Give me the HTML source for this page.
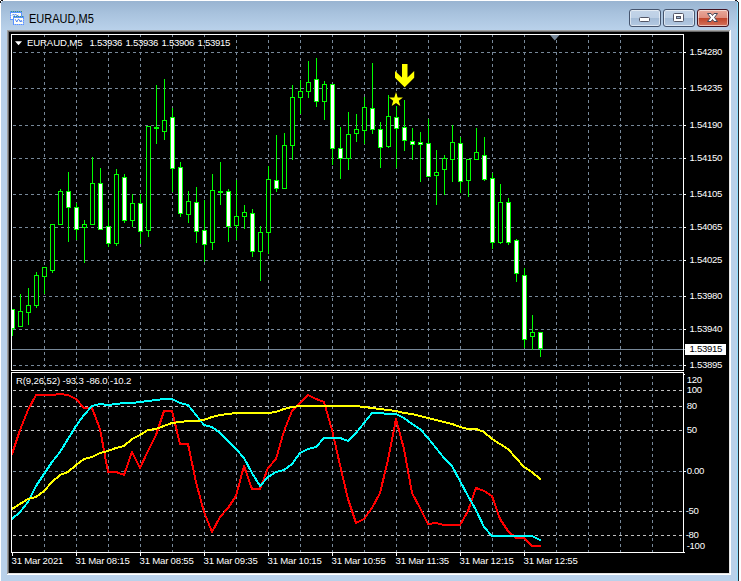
<!DOCTYPE html>
<html><head><meta charset="utf-8"><title>EURAUD,M5</title>
<style>
html,body{margin:0;padding:0;background:#fff;}
body{width:741px;height:581px;position:relative;overflow:hidden;font-family:"Liberation Sans",sans-serif;}
.win{position:absolute;left:1px;top:1px;width:736px;height:600px;background:#b9d1ea;}
.title{position:absolute;left:0;top:0;width:736px;height:29px;background:linear-gradient(#99b4d1,#a9c3de 45%,#b9d1ea);}
.edge-r1{position:absolute;left:737px;top:1px;width:1px;height:600px;background:#8fe0ff;}
.edge-r2{position:absolute;left:738px;top:0;width:1px;height:600px;background:#2a2a30;}
.cap{position:absolute;left:29.3px;top:11px;transform:scaleX(0.917);font-size:12px;line-height:16px;color:#000;white-space:nowrap;transform-origin:0 0;}
.sunk{position:absolute;left:7px;top:30px;width:724px;height:545px;background:#fff;}
.sunk .a{position:absolute;left:0;top:0;width:723px;height:544px;background:#a0a0a0;}
.sunk .b{position:absolute;left:1px;top:1px;width:722px;height:543px;background:#696969;}
.sunk .c{position:absolute;left:722px;top:1px;width:1px;height:543px;background:#e3e3e3;}
.sunk .d{position:absolute;left:1px;top:543px;width:722px;height:1px;background:#e3e3e3;}
.client{position:absolute;left:9px;top:32px;width:720px;height:541px;background:#000;overflow:hidden;}
.chart{position:absolute;left:0;top:0;}
.t{position:absolute;font-size:9.6px;line-height:11px;letter-spacing:-0.3px;color:#fff;white-space:nowrap;margin-left:-9px;margin-top:-32px;}
.t.blk{color:#000;}
.t.l{letter-spacing:-0.13px;}
.t.d{letter-spacing:-0.2px;}
.btn{position:absolute;top:9px;height:16px;border:1px solid #46556e;border-radius:3px;box-shadow:inset 0 0 0 1px rgba(255,255,255,.55);background:linear-gradient(#c3d4e8 0,#bccfe5 48%,#a4bcd7 52%,#b4c9e2 100%);}
.btn.x{border-color:#431422;background:linear-gradient(#e9a99b 0,#df8d7d 48%,#c1452b 52%,#d4735c 100%);}
.px{position:absolute;background:#15151a;}
.btn svg{position:absolute;left:0;top:0;}
</style></head><body>
<div class="win"><div class="title"></div></div>
<div class="edge-r1"></div><div class="edge-r2"></div>
<svg style="position:absolute;left:10px;top:11px" width="15" height="15" viewBox="0 0 15 15" shape-rendering="crispEdges">
<rect x="0" y="0" width="12" height="9" fill="#5a93ff"/>
<rect x="1" y="2" width="10" height="6" fill="#fffef6"/>
<path d="M1 0h1M3 0h1M5 0h1M7 0h1M9 0h1M11 0h1" stroke="#3f9a6a" stroke-width="1" transform="translate(0,0.5)"/>
<path d="M0 3h1M0 5h1M0 7h1" stroke="#8fb5ff" stroke-width="1" transform="translate(0,0.5)"/>
<polyline shape-rendering="auto" points="2,4.5 3.3,3.2 4.3,4.5 5.5,3 7,4.8 8.5,4" fill="none" stroke="#3c78f0" stroke-width="0.9"/>
<rect x="3" y="5" width="11" height="9" fill="#5a93ff"/>
<rect x="4" y="7" width="9" height="6" fill="#fffef6"/>
<path d="M4 5h1M6 5h1M8 5h1M10 5h1M12 5h1" stroke="#3f9a6a" stroke-width="1" transform="translate(0,0.5)"/>
<path d="M13 8h1M13 10h1M13 12h1M4 13h1M6 13h1M8 13h1M10 13h1M12 13h1" stroke="#8fb5ff" stroke-width="1" transform="translate(0,0.5)"/>
<polyline shape-rendering="auto" points="5.2,8.2 6.8,11 8.2,8.4 9,8.4 10.4,11 11.2,9.3 12,11" fill="none" stroke="#3c78f0" stroke-width="0.9"/>
</svg>
<div class="cap" id="cap">EURAUD,M5</div>
<div class="btn" style="left:629px;width:30px;"><svg width="29" height="16" viewBox="0 0 29 16"><rect x="9.5" y="7.5" width="10" height="4" rx="1" fill="#fff" stroke="#535666"/></svg></div>
<div class="btn" style="left:663px;width:30px;"><svg width="29" height="16" viewBox="0 0 29 16"><rect x="9.5" y="3.5" width="10" height="8" rx="1" fill="#fff" stroke="#535666"/><rect x="12.5" y="6.5" width="4" height="2" fill="#9ab3d0" stroke="#535666"/></svg></div>
<div class="btn x" style="left:697px;width:30px;"><svg width="30" height="16" viewBox="0 0 30 16"><path d="M9.5 3.5 L13 3.5 L14.5 5.5 L16 3.5 L19.5 3.5 L16.5 7.5 L19.5 11.5 L16 11.5 L14.5 9.5 L13 11.5 L9.5 11.5 L12.5 7.5 Z" fill="#fff" stroke="#47495a" stroke-width="1" stroke-linejoin="round"/></svg></div>
<div class="px" style="left:1px;top:0;width:2px;height:1px"></div><div class="px" style="left:0;top:1px;width:1px;height:2px"></div><div class="px" style="left:1px;top:1px;width:1px;height:1px;background:#fff"></div>
<div class="px" style="left:735px;top:0;width:2px;height:1px"></div><div class="px" style="left:737px;top:1px;width:1px;height:1px"></div><div class="px" style="left:738px;top:0;width:1px;height:2px;background:#fff"></div>
<div class="sunk"><div class="a"></div><div class="b"></div><div class="c"></div><div class="d"></div></div>
<div class="client">
<svg class="chart" width="720" height="541" viewBox="9 32 720 541" shape-rendering="crispEdges">
<line x1="44.5" y1="34" x2="44.5" y2="552" stroke="#778899" stroke-dasharray="3 3"/>
<line x1="76.5" y1="34" x2="76.5" y2="552" stroke="#778899" stroke-dasharray="3 3"/>
<line x1="108.5" y1="34" x2="108.5" y2="552" stroke="#778899" stroke-dasharray="3 3"/>
<line x1="140.5" y1="34" x2="140.5" y2="552" stroke="#778899" stroke-dasharray="3 3"/>
<line x1="172.5" y1="34" x2="172.5" y2="552" stroke="#778899" stroke-dasharray="3 3"/>
<line x1="204.5" y1="34" x2="204.5" y2="552" stroke="#778899" stroke-dasharray="3 3"/>
<line x1="236.5" y1="34" x2="236.5" y2="552" stroke="#778899" stroke-dasharray="3 3"/>
<line x1="268.5" y1="34" x2="268.5" y2="552" stroke="#778899" stroke-dasharray="3 3"/>
<line x1="300.5" y1="34" x2="300.5" y2="552" stroke="#778899" stroke-dasharray="3 3"/>
<line x1="332.5" y1="34" x2="332.5" y2="552" stroke="#778899" stroke-dasharray="3 3"/>
<line x1="364.5" y1="34" x2="364.5" y2="552" stroke="#778899" stroke-dasharray="3 3"/>
<line x1="396.5" y1="34" x2="396.5" y2="552" stroke="#778899" stroke-dasharray="3 3"/>
<line x1="428.5" y1="34" x2="428.5" y2="552" stroke="#778899" stroke-dasharray="3 3"/>
<line x1="460.5" y1="34" x2="460.5" y2="552" stroke="#778899" stroke-dasharray="3 3"/>
<line x1="492.5" y1="34" x2="492.5" y2="552" stroke="#778899" stroke-dasharray="3 3"/>
<line x1="524.5" y1="34" x2="524.5" y2="552" stroke="#778899" stroke-dasharray="3 3"/>
<line x1="556.5" y1="34" x2="556.5" y2="552" stroke="#778899" stroke-dasharray="3 3"/>
<line x1="588.5" y1="34" x2="588.5" y2="552" stroke="#778899" stroke-dasharray="3 3"/>
<line x1="620.5" y1="34" x2="620.5" y2="552" stroke="#778899" stroke-dasharray="3 3"/>
<line x1="652.5" y1="34" x2="652.5" y2="552" stroke="#778899" stroke-dasharray="3 3"/>
<line x1="13" y1="52.5" x2="683" y2="52.5" stroke="#778899" stroke-dasharray="3 3"/>
<line x1="13" y1="88.5" x2="683" y2="88.5" stroke="#778899" stroke-dasharray="3 3"/>
<line x1="13" y1="125.5" x2="683" y2="125.5" stroke="#778899" stroke-dasharray="3 3"/>
<line x1="13" y1="158.5" x2="683" y2="158.5" stroke="#778899" stroke-dasharray="3 3"/>
<line x1="13" y1="194.5" x2="683" y2="194.5" stroke="#778899" stroke-dasharray="3 3"/>
<line x1="13" y1="227.5" x2="683" y2="227.5" stroke="#778899" stroke-dasharray="3 3"/>
<line x1="13" y1="260.5" x2="683" y2="260.5" stroke="#778899" stroke-dasharray="3 3"/>
<line x1="13" y1="296.5" x2="683" y2="296.5" stroke="#778899" stroke-dasharray="3 3"/>
<line x1="13" y1="329.5" x2="683" y2="329.5" stroke="#778899" stroke-dasharray="3 3"/>
<line x1="13" y1="365.5" x2="683" y2="365.5" stroke="#778899" stroke-dasharray="3 3"/>
<line x1="13" y1="471.5" x2="683" y2="471.5" stroke="#778899" stroke-dasharray="3 3"/>
<line x1="13" y1="390.5" x2="683" y2="390.5" stroke="#c0c0c0" stroke-dasharray="3 3"/>
<line x1="13" y1="406.5" x2="683" y2="406.5" stroke="#c0c0c0" stroke-dasharray="3 3"/>
<line x1="13" y1="430.5" x2="683" y2="430.5" stroke="#c0c0c0" stroke-dasharray="3 3"/>
<line x1="13" y1="511.5" x2="683" y2="511.5" stroke="#c0c0c0" stroke-dasharray="3 3"/>
<line x1="13" y1="535.5" x2="683" y2="535.5" stroke="#c0c0c0" stroke-dasharray="3 3"/>
<rect x="9" y="371" width="720" height="1" fill="#000"/>
<line x1="12" y1="349.5" x2="685" y2="349.5" stroke="#778899"/>
<rect x="12" y="309" width="1" height="27" fill="#00ff00"/>
<rect x="10" y="309" width="5" height="20" fill="#00ff00"/>
<rect x="11" y="310" width="3" height="18" fill="#fff"/>
<rect x="20" y="294" width="1" height="33" fill="#00ff00"/>
<rect x="18" y="311" width="5" height="16" fill="#00ff00"/>
<rect x="19" y="312" width="3" height="14" fill="#000"/>
<rect x="28" y="288" width="1" height="37" fill="#00ff00"/>
<rect x="26" y="305" width="5" height="8" fill="#00ff00"/>
<rect x="27" y="306" width="3" height="6" fill="#000"/>
<rect x="36" y="272" width="1" height="36" fill="#00ff00"/>
<rect x="34" y="275" width="5" height="31" fill="#00ff00"/>
<rect x="35" y="276" width="3" height="29" fill="#000"/>
<rect x="44" y="267" width="1" height="27" fill="#00ff00"/>
<rect x="42" y="267" width="5" height="10" fill="#00ff00"/>
<rect x="43" y="268" width="3" height="8" fill="#000"/>
<rect x="52" y="224" width="1" height="49" fill="#00ff00"/>
<rect x="50" y="224" width="5" height="47" fill="#00ff00"/>
<rect x="51" y="225" width="3" height="45" fill="#000"/>
<rect x="60" y="189" width="1" height="36" fill="#00ff00"/>
<rect x="58" y="191" width="5" height="34" fill="#00ff00"/>
<rect x="59" y="192" width="3" height="32" fill="#000"/>
<rect x="68" y="172" width="1" height="70" fill="#00ff00"/>
<rect x="66" y="191" width="5" height="17" fill="#00ff00"/>
<rect x="67" y="192" width="3" height="15" fill="#fff"/>
<rect x="76" y="203" width="1" height="37" fill="#00ff00"/>
<rect x="74" y="207" width="5" height="23" fill="#00ff00"/>
<rect x="75" y="208" width="3" height="21" fill="#fff"/>
<rect x="84" y="220" width="1" height="43" fill="#00ff00"/>
<rect x="82" y="224" width="5" height="4" fill="#00ff00"/>
<rect x="83" y="225" width="3" height="2" fill="#000"/>
<rect x="92" y="157" width="1" height="68" fill="#00ff00"/>
<rect x="90" y="183" width="5" height="42" fill="#00ff00"/>
<rect x="91" y="184" width="3" height="40" fill="#000"/>
<rect x="100" y="168" width="1" height="62" fill="#00ff00"/>
<rect x="98" y="183" width="5" height="47" fill="#00ff00"/>
<rect x="99" y="184" width="3" height="45" fill="#fff"/>
<rect x="108" y="210" width="1" height="37" fill="#00ff00"/>
<rect x="106" y="226" width="5" height="18" fill="#00ff00"/>
<rect x="107" y="227" width="3" height="16" fill="#fff"/>
<rect x="116" y="169" width="1" height="77" fill="#00ff00"/>
<rect x="114" y="174" width="5" height="70" fill="#00ff00"/>
<rect x="115" y="175" width="3" height="68" fill="#000"/>
<rect x="124" y="174" width="1" height="49" fill="#00ff00"/>
<rect x="122" y="177" width="5" height="44" fill="#00ff00"/>
<rect x="123" y="178" width="3" height="42" fill="#fff"/>
<rect x="132" y="194" width="1" height="33" fill="#00ff00"/>
<rect x="130" y="203" width="5" height="18" fill="#00ff00"/>
<rect x="131" y="204" width="3" height="16" fill="#000"/>
<rect x="140" y="194" width="1" height="50" fill="#00ff00"/>
<rect x="138" y="203" width="5" height="29" fill="#00ff00"/>
<rect x="139" y="204" width="3" height="27" fill="#fff"/>
<rect x="148" y="126" width="1" height="111" fill="#00ff00"/>
<rect x="146" y="126" width="5" height="105" fill="#00ff00"/>
<rect x="147" y="127" width="3" height="103" fill="#000"/>
<rect x="156" y="85" width="1" height="59" fill="#00ff00"/>
<rect x="154" y="127" width="5" height="2" fill="#00ff00"/>
<rect x="164" y="79" width="1" height="61" fill="#00ff00"/>
<rect x="162" y="120" width="5" height="12" fill="#00ff00"/>
<rect x="163" y="121" width="3" height="10" fill="#000"/>
<rect x="172" y="108" width="1" height="84" fill="#00ff00"/>
<rect x="170" y="117" width="5" height="52" fill="#00ff00"/>
<rect x="171" y="118" width="3" height="50" fill="#fff"/>
<rect x="180" y="162" width="1" height="55" fill="#00ff00"/>
<rect x="178" y="167" width="5" height="47" fill="#00ff00"/>
<rect x="179" y="168" width="3" height="45" fill="#fff"/>
<rect x="188" y="191" width="1" height="32" fill="#00ff00"/>
<rect x="186" y="201" width="5" height="14" fill="#00ff00"/>
<rect x="187" y="202" width="3" height="12" fill="#000"/>
<rect x="196" y="187" width="1" height="56" fill="#00ff00"/>
<rect x="194" y="202" width="5" height="30" fill="#00ff00"/>
<rect x="195" y="203" width="3" height="28" fill="#fff"/>
<rect x="204" y="200" width="1" height="62" fill="#00ff00"/>
<rect x="202" y="230" width="5" height="15" fill="#00ff00"/>
<rect x="203" y="231" width="3" height="13" fill="#fff"/>
<rect x="212" y="174" width="1" height="76" fill="#00ff00"/>
<rect x="210" y="190" width="5" height="53" fill="#00ff00"/>
<rect x="211" y="191" width="3" height="51" fill="#000"/>
<rect x="220" y="162" width="1" height="43" fill="#00ff00"/>
<rect x="218" y="191" width="5" height="2" fill="#00ff00"/>
<rect x="228" y="189" width="1" height="53" fill="#00ff00"/>
<rect x="226" y="191" width="5" height="36" fill="#00ff00"/>
<rect x="227" y="192" width="3" height="34" fill="#fff"/>
<rect x="236" y="180" width="1" height="60" fill="#00ff00"/>
<rect x="234" y="216" width="5" height="10" fill="#00ff00"/>
<rect x="235" y="217" width="3" height="8" fill="#000"/>
<rect x="244" y="205" width="1" height="24" fill="#00ff00"/>
<rect x="242" y="212" width="5" height="5" fill="#00ff00"/>
<rect x="243" y="213" width="3" height="3" fill="#000"/>
<rect x="252" y="209" width="1" height="48" fill="#00ff00"/>
<rect x="250" y="213" width="5" height="39" fill="#00ff00"/>
<rect x="251" y="214" width="3" height="37" fill="#fff"/>
<rect x="260" y="226" width="1" height="55" fill="#00ff00"/>
<rect x="258" y="232" width="5" height="20" fill="#00ff00"/>
<rect x="259" y="233" width="3" height="18" fill="#000"/>
<rect x="268" y="166" width="1" height="88" fill="#00ff00"/>
<rect x="266" y="179" width="5" height="54" fill="#00ff00"/>
<rect x="267" y="180" width="3" height="52" fill="#000"/>
<rect x="276" y="135" width="1" height="57" fill="#00ff00"/>
<rect x="274" y="180" width="5" height="9" fill="#00ff00"/>
<rect x="275" y="181" width="3" height="7" fill="#fff"/>
<rect x="284" y="133" width="1" height="56" fill="#00ff00"/>
<rect x="282" y="145" width="5" height="44" fill="#00ff00"/>
<rect x="283" y="146" width="3" height="42" fill="#000"/>
<rect x="292" y="85" width="1" height="75" fill="#00ff00"/>
<rect x="290" y="97" width="5" height="49" fill="#00ff00"/>
<rect x="291" y="98" width="3" height="47" fill="#000"/>
<rect x="300" y="80" width="1" height="34" fill="#00ff00"/>
<rect x="298" y="91" width="5" height="7" fill="#00ff00"/>
<rect x="299" y="92" width="3" height="5" fill="#000"/>
<rect x="308" y="61" width="1" height="37" fill="#00ff00"/>
<rect x="306" y="82" width="5" height="10" fill="#00ff00"/>
<rect x="307" y="83" width="3" height="8" fill="#000"/>
<rect x="316" y="58" width="1" height="49" fill="#00ff00"/>
<rect x="314" y="79" width="5" height="23" fill="#00ff00"/>
<rect x="315" y="80" width="3" height="21" fill="#fff"/>
<rect x="324" y="81" width="1" height="39" fill="#00ff00"/>
<rect x="322" y="84" width="5" height="18" fill="#00ff00"/>
<rect x="323" y="85" width="3" height="16" fill="#000"/>
<rect x="332" y="84" width="1" height="81" fill="#00ff00"/>
<rect x="330" y="84" width="5" height="65" fill="#00ff00"/>
<rect x="331" y="85" width="3" height="63" fill="#fff"/>
<rect x="340" y="127" width="1" height="52" fill="#00ff00"/>
<rect x="338" y="148" width="5" height="11" fill="#00ff00"/>
<rect x="339" y="149" width="3" height="9" fill="#fff"/>
<rect x="348" y="112" width="1" height="58" fill="#00ff00"/>
<rect x="346" y="134" width="5" height="25" fill="#00ff00"/>
<rect x="347" y="135" width="3" height="23" fill="#000"/>
<rect x="356" y="114" width="1" height="28" fill="#00ff00"/>
<rect x="354" y="129" width="5" height="5" fill="#00ff00"/>
<rect x="355" y="130" width="3" height="3" fill="#000"/>
<rect x="364" y="97" width="1" height="47" fill="#00ff00"/>
<rect x="362" y="107" width="5" height="24" fill="#00ff00"/>
<rect x="363" y="108" width="3" height="22" fill="#000"/>
<rect x="372" y="63" width="1" height="71" fill="#00ff00"/>
<rect x="370" y="108" width="5" height="22" fill="#00ff00"/>
<rect x="371" y="109" width="3" height="20" fill="#fff"/>
<rect x="380" y="122" width="1" height="46" fill="#00ff00"/>
<rect x="378" y="129" width="5" height="19" fill="#00ff00"/>
<rect x="379" y="130" width="3" height="17" fill="#fff"/>
<rect x="388" y="95" width="1" height="53" fill="#00ff00"/>
<rect x="386" y="116" width="5" height="31" fill="#00ff00"/>
<rect x="387" y="117" width="3" height="29" fill="#000"/>
<rect x="396" y="106" width="1" height="62" fill="#00ff00"/>
<rect x="394" y="117" width="5" height="12" fill="#00ff00"/>
<rect x="395" y="118" width="3" height="10" fill="#fff"/>
<rect x="404" y="100" width="1" height="51" fill="#00ff00"/>
<rect x="402" y="127" width="5" height="14" fill="#00ff00"/>
<rect x="403" y="128" width="3" height="12" fill="#fff"/>
<rect x="412" y="128" width="1" height="32" fill="#00ff00"/>
<rect x="410" y="141" width="5" height="4" fill="#00ff00"/>
<rect x="411" y="142" width="3" height="2" fill="#fff"/>
<rect x="420" y="132" width="1" height="50" fill="#00ff00"/>
<rect x="418" y="142" width="5" height="3" fill="#00ff00"/>
<rect x="419" y="143" width="3" height="1" fill="#fff"/>
<rect x="428" y="119" width="1" height="58" fill="#00ff00"/>
<rect x="426" y="143" width="5" height="34" fill="#00ff00"/>
<rect x="427" y="144" width="3" height="32" fill="#fff"/>
<rect x="436" y="150" width="1" height="55" fill="#00ff00"/>
<rect x="434" y="172" width="5" height="4" fill="#00ff00"/>
<rect x="435" y="173" width="3" height="2" fill="#000"/>
<rect x="444" y="155" width="1" height="40" fill="#00ff00"/>
<rect x="442" y="158" width="5" height="12" fill="#00ff00"/>
<rect x="443" y="159" width="3" height="10" fill="#000"/>
<rect x="452" y="125" width="1" height="57" fill="#00ff00"/>
<rect x="450" y="142" width="5" height="18" fill="#00ff00"/>
<rect x="451" y="143" width="3" height="16" fill="#000"/>
<rect x="460" y="137" width="1" height="56" fill="#00ff00"/>
<rect x="458" y="143" width="5" height="39" fill="#00ff00"/>
<rect x="459" y="144" width="3" height="37" fill="#fff"/>
<rect x="468" y="159" width="1" height="38" fill="#00ff00"/>
<rect x="466" y="159" width="5" height="22" fill="#00ff00"/>
<rect x="467" y="160" width="3" height="20" fill="#000"/>
<rect x="476" y="128" width="1" height="32" fill="#00ff00"/>
<rect x="474" y="152" width="5" height="8" fill="#00ff00"/>
<rect x="475" y="153" width="3" height="6" fill="#000"/>
<rect x="484" y="137" width="1" height="44" fill="#00ff00"/>
<rect x="482" y="155" width="5" height="25" fill="#00ff00"/>
<rect x="483" y="156" width="3" height="23" fill="#fff"/>
<rect x="492" y="173" width="1" height="76" fill="#00ff00"/>
<rect x="490" y="178" width="5" height="65" fill="#00ff00"/>
<rect x="491" y="179" width="3" height="63" fill="#fff"/>
<rect x="500" y="184" width="1" height="60" fill="#00ff00"/>
<rect x="498" y="202" width="5" height="41" fill="#00ff00"/>
<rect x="499" y="203" width="3" height="39" fill="#000"/>
<rect x="508" y="198" width="1" height="47" fill="#00ff00"/>
<rect x="506" y="202" width="5" height="41" fill="#00ff00"/>
<rect x="507" y="203" width="3" height="39" fill="#fff"/>
<rect x="516" y="239" width="1" height="43" fill="#00ff00"/>
<rect x="514" y="240" width="5" height="34" fill="#00ff00"/>
<rect x="515" y="241" width="3" height="32" fill="#fff"/>
<rect x="524" y="268" width="1" height="80" fill="#00ff00"/>
<rect x="522" y="275" width="5" height="65" fill="#00ff00"/>
<rect x="523" y="276" width="3" height="63" fill="#fff"/>
<rect x="532" y="315" width="1" height="35" fill="#00ff00"/>
<rect x="530" y="332" width="5" height="5" fill="#00ff00"/>
<rect x="531" y="333" width="3" height="3" fill="#000"/>
<rect x="540" y="332" width="1" height="25" fill="#00ff00"/>
<rect x="538" y="332" width="5" height="17" fill="#00ff00"/>
<rect x="539" y="333" width="3" height="15" fill="#fff"/>
<rect x="9" y="34" width="2" height="520" fill="#000"/>
<polygon shape-rendering="auto" points="402,64 407.5,64 407.5,77.5 414.2,71 414.2,77.7 404.7,87.3 395,77.7 395,71 402,77.5" fill="#ffff00"/>
<polygon shape-rendering="auto" points="396.0,92.1 397.7,97.4 402.9,97.4 398.8,100.8 400.3,106.1 396.0,102.9 391.7,106.1 393.2,100.8 389.1,97.4 394.3,97.4" fill="#ffff00"/>
<polyline shape-rendering="crispEdges" points="12,454 20,430 28,410 36,395 44,395 52,395 60,394 68,395 76,399 84,408 92,408 100,429 108,472 116,472 124,475 132,452 140,468 148,451 156,435 164,411 172,411 180,444 188,444 196,482 204,512 212,532 220,517 228,508 236,496 244,466 252,489 260,489 268,468 276,459 284,431 292,411 300,403 308,395 316,399 324,402 332,430 340,465 348,499 356,523 364,519 372,508 380,493 388,460 396,419 404,449 412,493 420,508 428,524 436,523 444,525 452,525 460,525 468,511 476,488 484,491 492,496 500,519 508,531 516,538 524,538 532,546 540,546" fill="none" stroke="#ff0000" stroke-width="2" stroke-linejoin="round" stroke-linecap="square"/>
<polyline shape-rendering="crispEdges" points="12,519 20,512 28,502 36,486 44,474 52,462 60,452 68,439 76,426 84,415 92,406 100,404 108,405 116,404 124,403 132,403 140,402 148,401 156,400 164,399 172,399 180,403 188,405 196,415 204,425 212,427 220,433 228,441 236,449 244,458 252,473 260,486 268,477 276,472 284,470 292,464 300,453 308,449 316,447 324,438 332,438 340,438 348,441 356,433 364,423 372,413 380,413 388,414 396,414 404,418 412,424 420,429 428,438 436,448 444,458 452,466 460,481 468,496 476,510 484,527 492,536 500,536 508,536 516,536 524,536 532,536 540,540" fill="none" stroke="#00ffff" stroke-width="2" stroke-linejoin="round" stroke-linecap="square"/>
<polyline shape-rendering="crispEdges" points="12,509 20,504 28,499 36,497 44,491 52,482 60,475 68,472 76,465 84,459 92,457 100,453 108,451 116,448 124,446 132,439 140,435 148,430 156,429 164,426 172,423 180,422 188,421 196,421 204,420 212,417 220,415 228,414 236,413 244,413 252,413 260,413 268,413 276,412 284,409 292,407 300,406 308,406 316,406 324,406 332,406 340,406 348,406 356,406 364,407 372,408 380,409 388,410 396,411 404,413 412,414 420,416 428,418 436,420 444,422 452,424 460,427 468,429 476,429 484,432 492,439 500,444 508,449 516,458 524,467 532,472 540,479" fill="none" stroke="#ffff00" stroke-width="2" stroke-linejoin="round" stroke-linecap="square"/>
<rect x="11.5" y="34.5" width="672" height="336" fill="none" stroke="#fff"/>
<rect x="11.5" y="372.5" width="672" height="180" fill="none" stroke="#fff"/>
<rect x="684" y="52" width="2" height="1" fill="#fff"/>
<rect x="684" y="88" width="2" height="1" fill="#fff"/>
<rect x="684" y="125" width="2" height="1" fill="#fff"/>
<rect x="684" y="158" width="2" height="1" fill="#fff"/>
<rect x="684" y="194" width="2" height="1" fill="#fff"/>
<rect x="684" y="227" width="2" height="1" fill="#fff"/>
<rect x="684" y="260" width="2" height="1" fill="#fff"/>
<rect x="684" y="296" width="2" height="1" fill="#fff"/>
<rect x="684" y="329" width="2" height="1" fill="#fff"/>
<rect x="684" y="365" width="2" height="1" fill="#fff"/>
<rect x="684" y="471" width="2" height="1" fill="#fff"/>
<rect x="684" y="374" width="1" height="1" fill="#fff"/>
<rect x="684" y="552" width="1" height="1" fill="#fff"/>
<rect x="12" y="553" width="1" height="3" fill="#fff"/>
<rect x="76" y="553" width="1" height="3" fill="#fff"/>
<rect x="140" y="553" width="1" height="3" fill="#fff"/>
<rect x="204" y="553" width="1" height="3" fill="#fff"/>
<rect x="268" y="553" width="1" height="3" fill="#fff"/>
<rect x="332" y="553" width="1" height="3" fill="#fff"/>
<rect x="396" y="553" width="1" height="3" fill="#fff"/>
<rect x="460" y="553" width="1" height="3" fill="#fff"/>
<rect x="524" y="553" width="1" height="3" fill="#fff"/>
<polygon shape-rendering="auto" points="550,35 559.5,35 554.75,40.5" fill="#778899"/>
<polygon shape-rendering="auto" points="15,41.3 22,41.3 18.5,45.3" fill="#fff"/>
<rect x="685" y="344" width="41" height="11" fill="#fff"/>
</svg>
<span class="t" style="left:689.5px;top:46.2px;">1.54280</span>
<span class="t" style="left:689.5px;top:82.2px;">1.54235</span>
<span class="t" style="left:689.5px;top:119.2px;">1.54190</span>
<span class="t" style="left:689.5px;top:152.2px;">1.54150</span>
<span class="t" style="left:689.5px;top:188.2px;">1.54105</span>
<span class="t" style="left:689.5px;top:221.2px;">1.54065</span>
<span class="t" style="left:689.5px;top:254.2px;">1.54025</span>
<span class="t" style="left:689.5px;top:290.2px;">1.53980</span>
<span class="t" style="left:689.5px;top:323.2px;">1.53940</span>
<span class="t" style="left:689.5px;top:359.2px;">1.53895</span>
<span class="t blk" style="left:689.5px;top:343.2px;">1.53915</span>
<span class="t" style="left:686.7px;top:373.9px;">120</span>
<span class="t" style="left:686.7px;top:384.4px;">100</span>
<span class="t" style="left:686.7px;top:400.4px;">80</span>
<span class="t" style="left:686.7px;top:424.4px;">50</span>
<span class="t" style="left:686.7px;top:465.4px;">0.00</span>
<span class="t" style="left:685.7px;top:505.4px;">-50</span>
<span class="t" style="left:685.7px;top:529.4px;">-80</span>
<span class="t" style="left:686.7px;top:540.4px;">-100</span>
<span class="t d" style="left:11.5px;top:555.3px;">31 Mar 2021</span>
<span class="t d" style="left:75.5px;top:555.3px;">31 Mar 08:15</span>
<span class="t d" style="left:139.5px;top:555.3px;">31 Mar 08:55</span>
<span class="t d" style="left:203.5px;top:555.3px;">31 Mar 09:35</span>
<span class="t d" style="left:267.5px;top:555.3px;">31 Mar 10:15</span>
<span class="t d" style="left:331.5px;top:555.3px;">31 Mar 10:55</span>
<span class="t d" style="left:395.5px;top:555.3px;">31 Mar 11:35</span>
<span class="t d" style="left:459.5px;top:555.3px;">31 Mar 12:15</span>
<span class="t d" style="left:523.5px;top:555.3px;">31 Mar 12:55</span>
<span class="t l" style="left:27px;top:36.8px;">EURAUD,M5</span>
<span class="t" style="left:89.5px;top:36.8px;">1.53936</span>
<span class="t" style="left:125.5px;top:36.8px;">1.53936</span>
<span class="t" style="left:161.5px;top:36.8px;">1.53906</span>
<span class="t" style="left:197.5px;top:36.8px;">1.53915</span>
<span class="t l" style="left:16px;top:375.3px;">R(9,26,52) -93.3 -86.0 -10.2</span>
</div>
</body></html>
